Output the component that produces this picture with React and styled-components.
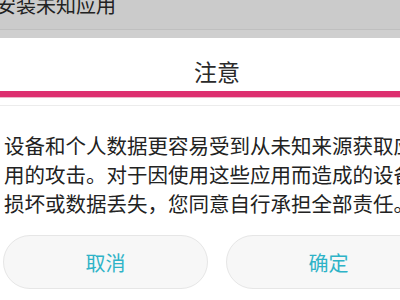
import styled, { createGlobalStyle } from "styled-components";

const GlobalStyle = createGlobalStyle`
  html, body {
    margin: 0;
    padding: 0;
    background: #ffffff;
    overflow: hidden;
  }
  body {
    font-family: "Noto Sans CJK SC", "Noto Sans", sans-serif;
  }
`;

const lines = [
  "设备和个人数据更容易受到从未知来源获取应",
  "用的攻击。对于因使用这些应用而造成的设备",
  "损坏或数据丢失，您同意自行承担全部责任。",
];

const App = () => {
  return (
    <Page>
      <GlobalStyle />
      <Backdrop>
        <BackdropTitle>安装未知应用</BackdropTitle>
      </Backdrop>
      <BackdropStrip />
      <Dialog>
        <Title>注意</Title>
        <Accent />
        <Divider />
        <Message>
          {lines.map((line, index) => (
            <Line key={index}>{line}</Line>
          ))}
        </Message>
        <Actions>
          <ActionButton>取消</ActionButton>
          <ActionButton>确定</ActionButton>
        </Actions>
      </Dialog>
    </Page>
  );
};

const Page = styled.div`
  width: 400px;
  height: 300px;
  overflow: hidden;
  background: #ffffff;
`;

const Backdrop = styled.div`
  height: 29px;
  background: #cbcbcb;
  border-bottom: 1px solid #bfbfbf;
  overflow: hidden;
`;

const BackdropTitle = styled.div`
  font-size: 20px;
  line-height: 1;
  color: #222;
  margin-top: -5px;
  margin-left: -4px;
  white-space: nowrap;
`;

const BackdropStrip = styled.div`
  height: 8px;
  background: #cfcfcf;
`;

const Dialog = styled.div`
  width: 434px;
  display: flex;
  flex-direction: column;
`;

const Title = styled.div`
  height: 53px;
  box-sizing: border-box;
  padding-top: 12px;
  display: flex;
  align-items: center;
  justify-content: center;
  font-size: 23px;
  color: #2a2a2a;
`;

const Accent = styled.div`
  height: 6px;
  background: #dd2f6f;
  border-bottom: 1px solid #f0b5c9;
`;

const Divider = styled.div`
  height: 1px;
  margin-top: 7px;
  background: #ececec;
`;

const Message = styled.div`
  padding: 25px 0 0 4px;
  font-size: 20.5px;
  line-height: 29px;
  color: #222;
`;

const Line = styled.div`
  white-space: nowrap;
`;

const Actions = styled.div`
  display: flex;
  gap: 18px;
  padding: 17px 3px 0;
`;

const ActionButton = styled.button`
  width: 205px;
  height: 54px;
  flex: none;
  border: 1px solid #e6e6e6;
  border-radius: 27px;
  background: #f7f7f7;
  color: #2eb3c7;
  font-family: "Noto Sans CJK SC", "Noto Sans", sans-serif;
  font-size: 20px;
  padding: 0;
`;

export default App;
